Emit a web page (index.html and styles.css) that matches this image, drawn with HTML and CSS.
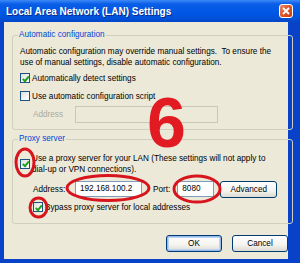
FILE: index.html
```html
<!doctype html>
<html lang="en">
  <head>
    <meta charset="UTF-8" />
    <title>Local Area Network (LAN) Settings</title>
    <link rel="stylesheet" href="styles.css">
  </head>
  <body>
    <div class="window">
      <div class="titlebar">
        <span class="title">Local Area Network (LAN) Settings</span>
        <span class="close-button">
          <svg width="8" height="8" viewBox="0 0 8 8">
            <path d="M1 1 L7 7 M7 1 L1 7" stroke="#fff" stroke-width="1.8" />
          </svg>
        </span>
      </div>
      <div class="dialog-body">
        <fieldset class="group group-auto">
          <legend>Automatic configuration</legend>
          <p class="info">
            Automatic configuration may override manual settings.&nbsp; To ensure the<br>
            use of manual settings, disable automatic configuration.
          </p>
          <div class="check-row">
            <span class="checkbox checked"></span>
            <span>Automatically detect settings</span>
          </div>
          <div class="check-row">
            <span class="checkbox"></span>
            <span>Use automatic configuration script</span>
          </div>
          <div class="field-row indent">
            <span class="label disabled">Address</span>
            <span class="textbox disabled wide"></span>
          </div>
        </fieldset>

        <fieldset class="group group-proxy">
          <legend>Proxy server</legend>
          <div class="check-row multi">
            <span class="checkbox checked"></span>
            <span>Use a proxy server for your LAN (These settings will not apply to<br>dial-up or VPN connections).</span>
          </div>
          <div class="field-row indent proxy-row">
            <span class="label">Address:</span>
            <span class="textbox address">192.168.100.2</span>
            <span class="label port-label">Port:</span>
            <span class="textbox port">8080</span>
            <button class="xp-button advanced">Advanced</button>
          </div>
          <div class="check-row indent bypass">
            <span class="checkbox checked"></span>
            <span>Bypass proxy server for local addresses</span>
          </div>
        </fieldset>

        <div class="button-row">
          <button class="xp-button default">OK</button>
          <button class="xp-button">Cancel</button>
        </div>
      </div>

      <div class="annotations">
        <span class="big-six">6</span>
        <svg width="300" height="263" viewBox="0 0 300 263">
          <g fill="none" stroke="#d8141c" stroke-width="3">
            <ellipse cx="25" cy="162.5" rx="9" ry="13.5" />
            <ellipse cx="38.5" cy="207.5" rx="8.5" ry="9.5" />
            <ellipse cx="108" cy="188" rx="41" ry="12.5" />
            <ellipse cx="197" cy="189" rx="23" ry="13" />
          </g>
        </svg>
      </div>
    </div>
  </body>
</html>
```

FILE: styles.css
```css
html,
body {
  margin: 0;
  padding: 0;
}
body {
  width: 300px;
  height: 263px;
  overflow: hidden;
  font-family: "Liberation Sans", Arial, sans-serif;
  font-size: 8.2px;
  color: #000;
}

.window {
  position: relative;
  width: 300px;
  height: 263px;
  box-sizing: border-box;
  background-color: #0842c8;
  padding: 0 4px 4px 4px;
  display: flex;
  flex-direction: column;
}

.titlebar {
  height: 22px;
  margin: 0 -4px;
  padding: 0 6px;
  display: flex;
  align-items: center;
  justify-content: space-between;
  background: linear-gradient(#3d8af7 0%, #0a5ee6 18%, #0058e6 55%, #0050d8 85%, #0246c6 100%);
}
.title {
  color: #fff;
  font-weight: bold;
  font-size: 10px;
  text-shadow: 1px 1px 0 #0a2a8a;
}
.close-button {
  width: 14px;
  height: 14px;
  box-sizing: border-box;
  border: 1px solid #fff;
  border-radius: 3px;
  background: linear-gradient(135deg, #e88a6a 0%, #e05a2c 45%, #c83a10 100%);
  display: flex;
  align-items: center;
  justify-content: center;
  margin-right: 1px;
}

.dialog-body {
  flex: 1;
  width: 284px;
  box-sizing: border-box;
  background-color: #ece9d8;
  padding: 7px 0 0 8px;
  display: flex;
  flex-direction: column;
}

.group {
  margin: 0;
  width: 281px;
  min-width: 0;
  box-sizing: border-box;
  border: 1px solid #d0d0bf;
  border-radius: 3px;
  padding: 0 0 0 7px;
}
.group legend {
  color: #0046d5;
  padding: 0 1px;
  margin-left: -2px;
  line-height: 12px;
}
.group-auto {
  height: 101px;
}
.group-proxy {
  margin-top: 3px;
  height: 91px;
}

.info {
  margin: 5px 0 1px 0;
  line-height: 11px;
}

.check-row {
  display: flex;
  align-items: center;
  gap: 2px;
  height: 18px;
}
.check-row.multi {
  height: 25px;
  margin-top: 6px;
  line-height: 11px;
}
.check-row.bypass {
  height: 16px;
  margin-top: 0;
}

.checkbox {
  flex: none;
  width: 10px;
  height: 10px;
  box-sizing: border-box;
  border: 1px solid #1c5180;
  background: linear-gradient(135deg, #dcdcd7 0%, #f6f6f4 60%, #fff 100%);
  position: relative;
}
.checkbox.checked::after {
  content: "";
  position: absolute;
  left: 2.5px;
  top: 0.5px;
  width: 2px;
  height: 4.5px;
  border: solid #21a121;
  border-width: 0 2px 2px 0;
  transform: rotate(40deg);
}

.indent {
  padding-left: 13px;
}

.field-row {
  display: flex;
  align-items: center;
  height: 18px;
}
.field-row.proxy-row {
  height: 20px;
  margin-top: 3px;
}
.label {
  width: 42px;
}
.label.disabled {
  color: #aca899;
}
.textbox {
  height: 16px;
  box-sizing: border-box;
  border: 1px solid #7f9db9;
  background: #fff;
  padding: 0 4px;
  line-height: 14px;
}
.textbox.disabled {
  height: 17px;
  background: #ece9d8;
  border-color: #c9c7ba;
}
.textbox.wide {
  width: 143px;
}
.textbox.address {
  width: 67px;
}
.port-label {
  width: auto;
  margin: 0 7px 0 11px;
}
.textbox.port {
  width: 37px;
}

.xp-button {
  font-family: "Liberation Sans", Arial, sans-serif;
  font-size: 8.2px;
  color: #000;
  height: 17px;
  margin: 0;
  border: 1px solid #003c74;
  border-radius: 3px;
  background: linear-gradient(#ffffff 0%, #f4f3ee 60%, #dcdad0 100%);
  padding: 0;
}
.xp-button.advanced {
  width: 57px;
  margin-left: 6px;
}
.xp-button.default {
  box-shadow: inset 0 0 0 1px #98b8ea, inset 0 0 0 2px #bcd4f6;
}

.button-row {
  display: flex;
  justify-content: flex-end;
  gap: 10px;
  margin-top: 11px;
  width: 276px;
}
.button-row .xp-button {
  width: 56px;
}

.annotations {
  position: absolute;
  left: 0;
  top: 0;
  width: 300px;
  height: 263px;
  pointer-events: none;
}
.annotations svg {
  position: absolute;
  left: 0;
  top: 0;
}
.big-six {
  position: absolute;
  left: 147px;
  top: 88px;
  font-family: "Liberation Sans", Arial, sans-serif;
  font-weight: bold;
  font-size: 70px;
  line-height: 70px;
  color: #e21a22;
}
```
